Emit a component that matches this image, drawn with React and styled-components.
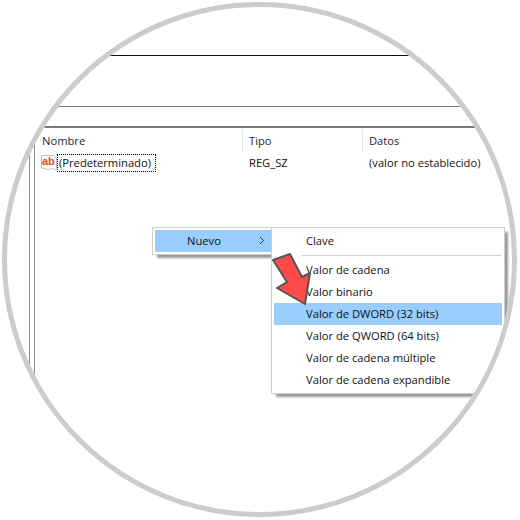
// Registro de Windows: menu contextual "Nuevo" dentro de un marco circular.
import React from "react";
import styled, { createGlobalStyle } from "styled-components";

const Global = createGlobalStyle`
  html, body { margin: 0; padding: 0; background: #fff; }
  body { font-family: "Open Sans", "Liberation Sans", sans-serif; font-size: 11.2px; color: #111; }
`;

const Page = styled.div`
  width: 520px;
  height: 520px;
  padding: 2px;
  box-sizing: border-box;
`;
const Circle = styled.div`
  position: relative;
  width: 515px;
  height: 515px;
  box-sizing: border-box;
  border: 5px solid #cccccc;
  border-radius: 50%;
  overflow: hidden;
  background: #fff;
`;
const Rule = styled.div`
  height: ${(p) => p.$h || 1}px;
  margin-top: ${(p) => p.$top}px;
  background: ${(p) => p.$color};
`;
const Pane = styled.div`
  display: flex;
  height: 380px;
`;
const Gutter = styled.div`
  width: 6px;
  margin-left: 22px;
  box-sizing: border-box;
  border-left: 1px solid #8a8d92;
  border-right: 1px solid #8a8d92;
`;
const List = styled.div`
  flex: 1;
`;
const Columns = styled.div`
  display: grid;
  grid-template-columns: 208px 120px 1fr;
`;
const Head = styled.div`
  height: 23px;
  margin-top: 1px;
  line-height: 23px;
  padding-left: ${(p) => p.$pad}px;
  border-right: 1px solid #e5e5e5;
  color: #1f1f2e;
  &:last-child { border-right: 0; }
`;
const Cell = styled.div`
  display: flex;
  align-items: center;
  height: 19px;
  margin-top: 1px;
  padding-left: ${(p) => p.$pad}px;
`;
const Focus = styled.span`
  padding: 0 5px 0 2px;
  line-height: 18px;
  outline: 1px dotted #000;
  outline-offset: -1px;
`;
const MenuLayer = styled.div`
  position: absolute;
  left: 145px;
  top: 220px;
  display: flex;
  align-items: flex-start;
`;
const Menu = styled.div`
  position: relative;
  box-sizing: border-box;
  width: ${(p) => p.$w}px;
  margin-right: ${(p) => p.$overlap || 0}px;
  padding: 2px;
  background: #fff;
  border: 1px solid #cfcfcf;
  box-shadow: 4px 4px 2px -1px #9a9a9a;
`;
const Item = styled.div`
  display: flex;
  align-items: center;
  justify-content: space-between;
  box-sizing: border-box;
  height: 22px;
  padding: 0 ${(p) => p.$right || 0}px 2px ${(p) => p.$pad}px;
  background: ${(p) => (p.$active ? "#99ccff" : "transparent")};
  white-space: nowrap;
`;
const Separator = styled.div`
  height: 1px;
  margin: 3px 1px 3px 28px;
  background: #cfcfcf;
`;
const Arrow = styled.svg`
  position: absolute;
  left: -1px;
  top: 26px;
  overflow: visible;
`;

const subItems = [
  "Valor de cadena",
  "Valor binario",
  "Valor de DWORD (32 bits)",
  "Valor de QWORD (64 bits)",
  "Valor de cadena múltiple",
  "Valor de cadena expandible",
];

function StringIcon() {
  return (
    <svg width="16" height="17" viewBox="0 0 16 17">
      <path
        d="M0.5 1.5h12l3 3v10.5q-2 1-3.5 0t-3.5 0t-3.5 0t-4.5-1z"
        fill="#fff"
        stroke="#b9bcc2"
      />
      <text x="1" y="10.5" fontFamily="Liberation Sans" fontWeight="700" fontSize="11" fill="#d84a2a">
        ab
      </text>
    </svg>
  );
}

function App() {
  return (
    <Page>
      <Global />
      <Circle>
        <Rule $top={48} $color="#111" />
        <Rule $top={50} $color="#808080" />
        <Rule $top={19} $h={2} $color="#7a7a7a" />
        <Pane>
          <Gutter />
          <List>
            <Columns>
              <Head $pad={7}>Nombre</Head>
              <Head $pad={6}>Tipo</Head>
              <Head $pad={6}>Datos</Head>
              <Cell $pad={6}>
                <StringIcon />
                <Focus>(Predeterminado)</Focus>
              </Cell>
              <Cell $pad={6}>REG_SZ</Cell>
              <Cell $pad={6}>(valor no establecido)</Cell>
            </Columns>
          </List>
        </Pane>
        <MenuLayer>
          <Menu $w={122} $overlap={-3}>
            <Item $pad={32} $right={6} $active>
              Nuevo
              <svg width="6" height="9" viewBox="0 0 6 9">
                <path d="M1 1l3.5 3.5L1 8" fill="none" stroke="#333" />
              </svg>
            </Item>
          </Menu>
          <Menu $w={234}>
            <Item $pad={32}>Clave</Item>
            <Separator />
            {subItems.map((label) => (
              <Item key={label} $pad={32} $active={label.includes("DWORD")}>
                {label}
              </Item>
            ))}
            <Arrow width="44" height="56" viewBox="0 0 44 56">
              <path
                d="M2 6L19 0L31 23L39 19L34 50L6 34L16 28Z"
                fill="#ff4a4a"
                stroke="#555"
                strokeWidth="2"
                strokeLinejoin="round"
              />
            </Arrow>
          </Menu>
        </MenuLayer>
      </Circle>
    </Page>
  );
}

export default App;
